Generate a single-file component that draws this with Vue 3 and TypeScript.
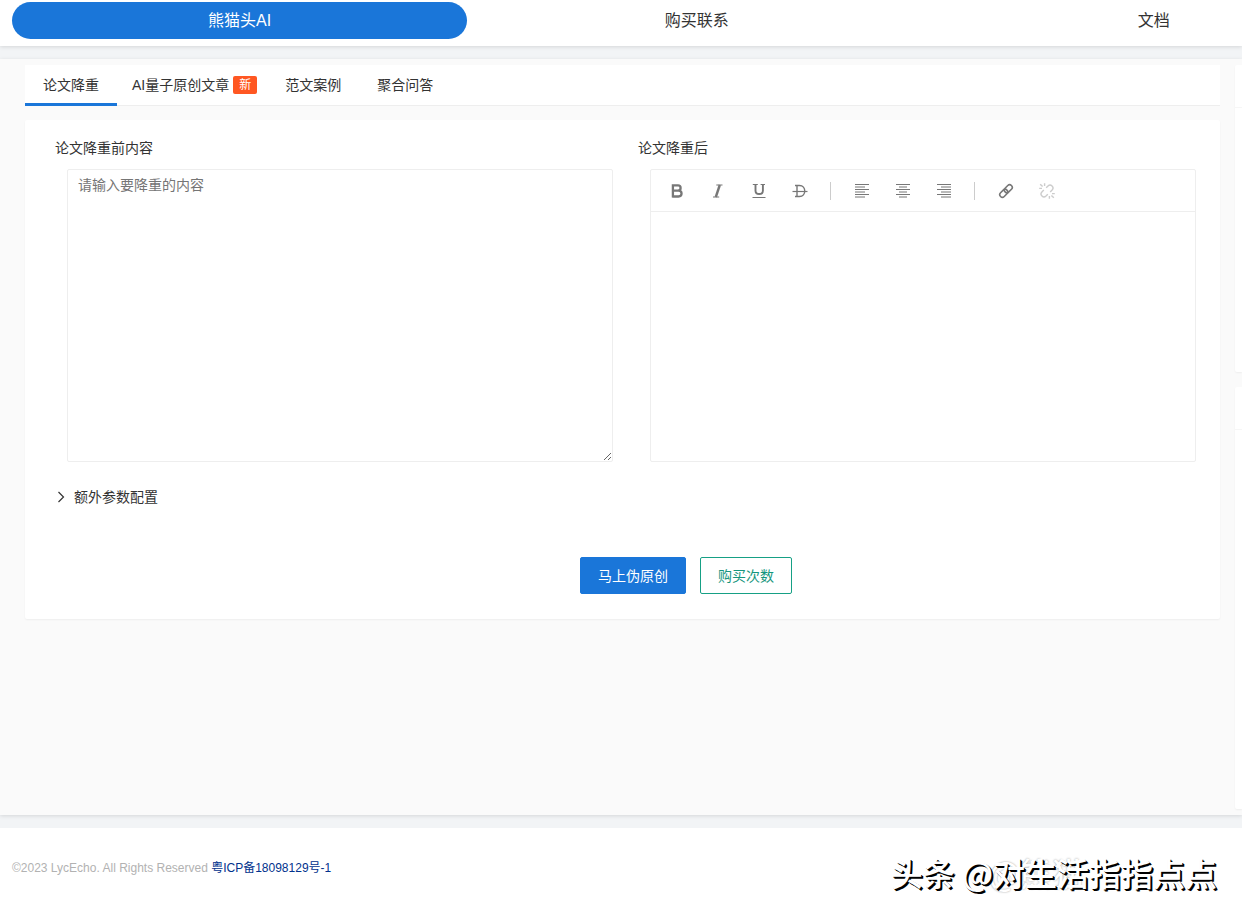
<script setup lang="ts">
import { ref } from 'vue'

const navItems: string[] = ['熊猫头AI', '购买联系', '文档']
const tabs: { label: string; badge?: string }[] = [
  { label: '论文降重' },
  { label: 'AI量子原创文章', badge: '新' },
  { label: '范文案例' },
  { label: '聚合问答' },
]
const activeNav = ref(0)
const activeTab = ref(0)
const source = ref('')
</script>

<template>
  <div class="page">
    <header class="topbar">
      <nav class="nav">
        <a
          v-for="(item, i) in navItems"
          :key="item"
          href="#"
          class="nav-item"
          :class="{ active: i === activeNav }"
          @click.prevent="activeNav = i"
        >{{ item }}</a>
      </nav>
    </header>

    <main class="main">
      <div class="primary">
        <div class="tabs" role="tablist">
          <button
            v-for="(tab, i) in tabs"
            :key="tab.label"
            type="button"
            role="tab"
            class="tab"
            :class="{ active: i === activeTab, badged: tab.badge }"
            :aria-selected="i === activeTab"
            @click="activeTab = i"
          >
            {{ tab.label }}<span v-if="tab.badge" class="badge">{{ tab.badge }}</span>
          </button>
        </div>

        <section class="card">
          <div class="columns">
            <div class="column">
              <label class="label" for="source">论文降重前内容</label>
              <textarea id="source" v-model="source" class="field source" placeholder="请输入要降重的内容"></textarea>
            </div>
            <div class="column">
              <span id="result-label" class="label">论文降重后</span>
              <div class="field editor">
                <div class="toolbar">
                  <button type="button" class="tool" aria-label="粗体">
                    <svg viewBox="0 0 16 16"><path d="M3.4 2.4H9a2.6 2.6 0 0 1 0 5.2H3.4M3.4 7.6h6.2a2.9 2.9 0 0 1 0 5.9H3.4M3.9 1.3v13.3" fill="none" stroke="currentColor" stroke-width="2.3" /></svg>
                  </button>
                  <button type="button" class="tool" aria-label="斜体">
                    <svg viewBox="0 0 16 16"><path d="M6.3 2h6.2M3 14h6.2" stroke="currentColor" stroke-width="1" /><path d="M9.8 2L5.8 14" stroke="currentColor" stroke-width="2.4" /></svg>
                  </button>
                  <button type="button" class="tool" aria-label="下划线">
                    <svg viewBox="0 0 16 16" fill="none" stroke="currentColor"><path d="M1.8 1.5h5M9.6 1.5h4.4M1.5 14.5h13" stroke-width="1.2" /><path d="M4.5 1.5v6.2c0 4.4 7.4 4.4 7.4 0V1.5" stroke-width="1.9" /></svg>
                  </button>
                  <button type="button" class="tool" aria-label="删除线">
                    <svg viewBox="0 0 16 16" fill="none" stroke="currentColor"><path d="M3 2.5h4.5c7 0 7 11 0 11H3M5 2.5v11" stroke-width="1.4" /><path d="M.5 8.5h15" stroke-width="1.2" /></svg>
                  </button>
                  <span class="divider"></span>
                  <button type="button" class="tool" aria-label="左对齐">
                    <svg viewBox="0 0 16 16"><path d="M1 1.5h14M1 4h10M1 6.5h14M1 9h10M1 11.5h14M1 14h10" stroke="currentColor" /></svg>
                  </button>
                  <button type="button" class="tool" aria-label="居中对齐">
                    <svg viewBox="0 0 16 16"><path d="M1 1.5h14M4 4h8M1 6.5h14M4 9h8M1 11.5h14M4 14h8" stroke="currentColor" /></svg>
                  </button>
                  <button type="button" class="tool" aria-label="右对齐">
                    <svg viewBox="0 0 16 16"><path d="M1 1.5h14M5 4h10M1 6.5h14M5 9h10M1 11.5h14M5 14h10" stroke="currentColor" /></svg>
                  </button>
                  <span class="divider"></span>
                  <button type="button" class="tool" aria-label="插入链接">
                    <svg viewBox="0 0 16 16" fill="none" stroke="currentColor" stroke-width="1.6"><g transform="rotate(-45 8 8)"><rect x="0.3" y="5.4" width="9" height="5.2" rx="2.6" /><rect x="6.7" y="5.4" width="9" height="5.2" rx="2.6" /></g></svg>
                  </button>
                  <button type="button" class="tool" aria-label="取消链接" disabled>
                    <svg viewBox="0 0 16 16" fill="none" stroke="currentColor" stroke-width="1.4"><path d="M7.2 4.8l1.8-1.8a2.9 2.9 0 0 1 4.1 4.1L11.2 9M8.8 11.2L7 13a2.9 2.9 0 0 1-4.1-4.1L4.8 7M5.6.2v2.8M.2 5.4h2.8M1.2 1.2l2.4 2.4M10.4 15.8v-2.8M15.8 10.6h-2.8M14.8 14.8l-2.4-2.4" /></svg>
                  </button>
                </div>
                <div class="editor-body" contenteditable="true" role="textbox" aria-multiline="true" aria-labelledby="result-label"></div>
              </div>
            </div>
          </div>

          <button type="button" class="extra">
            <svg viewBox="0 0 12 12"><path d="M3.5 1l5 5-5 5" fill="none" stroke="currentColor" stroke-width="1.2" /></svg>
            额外参数配置
          </button>

          <div class="actions">
            <button type="button" class="btn solid">马上伪原创</button>
            <button type="button" class="btn outline">购买次数</button>
          </div>
        </section>
      </div>

      <aside class="side">
        <div class="side-card short"></div>
        <div class="side-card tall"></div>
      </aside>
    </main>

    <footer class="footer">
      <p class="copyright">©2023 LycEcho. All Rights Reserved <a href="#">粤ICP备18098129号-1</a></p>
      <div class="watermark"><span class="ghost" aria-hidden="true">@熊猫</span>头条 @对生活指指点点</div>
    </footer>
  </div>
</template>

<style>
body {
  margin: 0;
  background: #f2f4f6;
}
</style>

<style scoped>
.page {
  display: flex;
  flex-direction: column;
  gap: 13px;
  min-height: 100vh;
  overflow: hidden;
  color: #333;
  font: 14px/24px "Liberation Sans", "Noto Sans CJK SC", sans-serif;
}
.page *,
.page {
  box-sizing: border-box;
}
button {
  margin: 0;
  padding: 0;
  border: 0;
  background: none;
  color: inherit;
  font: inherit;
  cursor: pointer;
}
.topbar {
  height: 46px;
  background: #fff;
  box-shadow: 0 1px 4px rgba(0, 0, 0, 0.12);
}
.nav {
  display: grid;
  grid-template-columns: repeat(3, 37%);
  gap: 2px;
  padding: 2px 0 0 12px;
}
.nav-item {
  height: 37px;
  border-radius: 19px;
  color: #333;
  font-size: 16px;
  line-height: 37px;
  text-align: center;
  text-decoration: none;
}
.nav-item.active {
  background: #1a76d9;
  color: #fff;
}
.main {
  flex: 1;
  display: grid;
  grid-template-columns: minmax(0, 1fr) 7px;
  gap: 15px;
  padding: 6px 0 6px 25px;
  background: #fafafa;
  box-shadow: 0 1px 4px rgba(0, 0, 0, 0.12);
}
.tabs {
  display: flex;
  height: 41px;
  background: #fff;
  border-bottom: 1px solid #eee;
}
.tab {
  display: flex;
  align-items: center;
  gap: 4px;
  height: 41px;
  padding: 2px 18px 0;
  border-bottom: 3px solid transparent;
}
.tab.badged {
  padding: 2px 10px 0 15px;
}
.tab.active {
  border-bottom-color: #1a76d9;
}
.badge {
  padding: 0 6px;
  border-radius: 2px;
  background: #ff5722;
  color: #fff;
  font-size: 12px;
  line-height: 18px;
}
.card {
  margin-top: 14px;
  padding: 16px 24px 25px 30px;
  background: #fff;
  border-radius: 2px;
  box-shadow: 0 1px 2px rgba(0, 0, 0, 0.05);
}
.columns {
  display: grid;
  grid-template-columns: repeat(2, minmax(0, 1fr));
  gap: 25px;
}
.column {
  display: flex;
  flex-direction: column;
  gap: 9px;
}
.field {
  height: 293px;
  margin: 0 0 0 12px;
  border: 1px solid #eee;
  border-radius: 2px;
  background: #fff;
}
.source {
  padding: 6px 10px;
  color: #333;
  font: inherit;
  line-height: 18px;
  resize: vertical;
  outline: 0;
}
.source::placeholder {
  color: #757575;
}
.toolbar {
  display: flex;
  align-items: center;
  height: 42px;
  padding: 0 5px;
  border-bottom: 1px solid #eee;
}
.tool {
  display: grid;
  place-items: center;
  width: 41px;
  height: 30px;
  color: #777;
}
.tool svg {
  width: 16px;
  height: 16px;
}
.tool:disabled {
  color: #ccc;
}
.divider {
  width: 1px;
  height: 18px;
  margin: 0 10px;
  background: #ccc;
}
.editor-body {
  height: 249px;
  outline: 0;
}
.extra {
  display: flex;
  align-items: center;
  gap: 7px;
  margin-top: 23px;
}
.extra svg {
  width: 12px;
  height: 12px;
}
.actions {
  display: flex;
  justify-content: center;
  gap: 14px;
  margin-top: 48px;
  padding-left: 121px;
}
.btn {
  height: 37px;
  padding: 0 17px;
  border: 1px solid #1a76d9;
  border-radius: 2px;
}
.solid {
  background: #1a76d9;
  color: #fff;
}
.outline {
  border-color: #16a085;
  background: #fff;
  color: #16967e;
}
.side {
  display: flex;
  flex-direction: column;
  gap: 15px;
}
.side-card {
  background: #fff;
  border-radius: 2px 0 0 2px;
  box-shadow: 0 1px 2px rgba(0, 0, 0, 0.05);
}
.side-card::before {
  content: "";
  display: block;
  height: 42px;
  border-bottom: 1px solid #f6f6f6;
}
.short {
  height: 307px;
}
.tall {
  flex: 1;
}
.footer {
  display: flex;
  align-items: flex-start;
  justify-content: space-between;
  height: 89px;
  padding: 26px 25px 0 12px;
  background: #fff;
}
.copyright {
  margin: 0;
  color: #b2b2b2;
  font-size: 12px;
  line-height: 28px;
}
.copyright a {
  color: #01328d;
  text-decoration: none;
}
.watermark {
  position: relative;
  z-index: 0;
  color: #fff;
  font-family: "Noto Sans CJK SC", sans-serif;
  font-size: 32px;
  font-weight: 500;
  line-height: 36px;
  white-space: nowrap;
  text-shadow: 1px 1px 0 #000, 2px 2px 0 #000;
}
.ghost {
  position: absolute;
  z-index: -1;
  left: 98px;
  top: 0;
  color: #fff;
  text-shadow: 0 0 2px #999;
}
</style>
